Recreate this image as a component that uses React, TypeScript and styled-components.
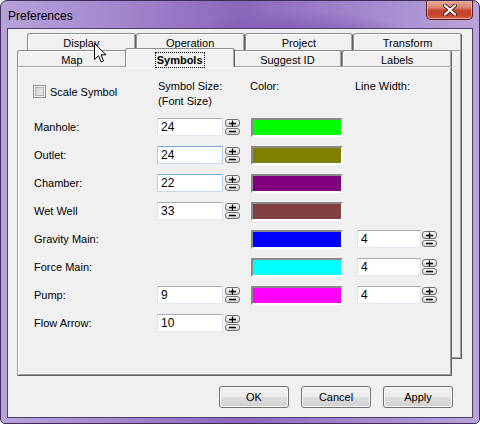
import React from 'react';
import styled, { createGlobalStyle, css } from 'styled-components';

const Global = createGlobalStyle`
  html, body { margin: 0; padding: 0; background: #ffffff; }
  body { font-family: "Liberation Sans", Arial, sans-serif; font-size: 11px; color: #000; }
  * { box-sizing: border-box; }
`;

const Window = styled.div`
  position: relative;
  width: 480px;
  height: 424px;
  display: flex;
  flex-direction: column;
  border: 1px solid #3b2c58;
  border-radius: 7px 7px 5px 5px;
  padding: 0 6px 5px 6px;
  overflow: hidden;
  background:
    radial-gradient(ellipse 120px 30px at 300px 40px, rgba(120, 80, 175, 0.9), rgba(120, 80, 175, 0) 100%),
    linear-gradient(90deg, #b7a2d9 0%, #a286cd 25%, #8b66bc 50%, #9f83cb 72%, #b8a4da 100%);
`;

const TitleBar = styled.div`
  height: 27px;
  display: flex;
  align-items: flex-start;
  justify-content: space-between;
`;

const Title = styled.div`
  font-family: "Liberation Sans", Arial, sans-serif;
  font-size: 12px;
  padding: 8px 0 0 1px;
  color: #000;
`;

const CloseButton = styled.div`
  width: 47px;
  height: 20px;
  margin-top: -1px;
  border: 1px solid #5a1f1a;
  border-top: none;
  border-radius: 0 0 5px 5px;
  display: flex;
  align-items: center;
  justify-content: center;
  background: linear-gradient(180deg, #eab0a2 0%, #d98372 40%, #c5452f 55%, #c4452d 80%, #d76b52 100%);
  box-shadow: inset 0 0 0 1px rgba(255, 210, 200, 0.55);
`;

const Client = styled.div`
  flex: 1;
  display: flex;
  flex-direction: column;
  background: #f0f0f0;
  border: 1px solid #4e3e68;
  padding: 4px 9px 0 9px;
`;

const TabControl = styled.div`
  display: grid;
  width: 445px;
`;

const BackLayer = styled.div`
  grid-area: 1 / 1;
  margin-left: 10px;
  display: flex;
  flex-direction: column;
`;

const FrontLayer = styled.div`
  grid-area: 1 / 1;
  margin-top: 17px;
  margin-right: 10px;
  display: flex;
  flex-direction: column;
`;

const TabRow = styled.div<{ $h: number }>`
  display: flex;
  height: ${(p) => p.$h}px;
`;

const Tab = styled.div<{ $selected?: boolean }>`
  position: relative;
  flex: 1;
  display: flex;
  justify-content: center;
  padding-top: 2px;
  background: #f0f0f0;
  border: 1px solid;
  border-bottom: none;
  border-color: #8c8c8c #5f5f5f transparent #8c8c8c;
  border-radius: 3px 3px 0 0;
  box-shadow: inset 1px 1px 0 #ffffff, inset -1px 0 0 #a8a8a8;
  line-height: 14px;
  ${(p) =>
    p.$selected &&
    css`
      z-index: 2;
      margin: -2px -2px -1px -2px;
      padding-top: 4px;
      font-weight: bold;
    `}
`;

const FocusText = styled.span`
  outline: 1px dotted #000;
  outline-offset: 0px;
  padding: 0 1px;
  height: 14px;
`;

const BackPanel = styled.div`
  height: 309px;
  background: #f0f0f0;
  border: 1px solid;
  border-color: #a0a0a0 #5f5f5f #5f5f5f #a0a0a0;
  box-shadow: inset -1px -1px 0 #a0a0a0;
`;

const Panel = styled.div`
  position: relative;
  z-index: 1;
  height: 310px;
  background: #f0f0f0;
  border: 1px solid;
  border-color: #a0a0a0 #5f5f5f #5f5f5f #a0a0a0;
  box-shadow: inset 1px 1px 0 #ffffff, inset -1px -1px 0 #a0a0a0;
  padding: 12px 0 0 16px;
`;

const Grid = styled.div`
  display: grid;
  grid-template-columns: 123px 93px 107px 90px;
  grid-template-rows: 34px repeat(8, 28px);
  align-items: center;
`;

const HeaderCell = styled.div<{ $shift?: number }>`
  align-self: start;
  line-height: 15px;
  margin-left: ${(p) => p.$shift ?? 0}px;
`;

const CheckGroup = styled.label`
  align-self: start;
  margin-top: 6px;
  margin-left: -1px;
  display: flex;
  align-items: center;
  gap: 4px;
`;

const CheckBox = styled.span`
  width: 13px;
  height: 13px;
  border: 1px solid #8e8f8f;
  background: #f4f4f4;
  box-shadow: inset 0 0 0 1px #f4f4f4, inset 0 0 0 2px #b0b0b0;
  background-image: linear-gradient(135deg, #cbcbcb, #f6f6f6);
`;

const RowLabel = styled.div`
  line-height: 14px;
`;

const SpinField = styled.div<{ $gap: number }>`
  display: flex;
  align-items: center;
  gap: ${(p) => p.$gap}px;
`;

const TextInput = styled.input<{ $w: number; $hot?: boolean }>`
  width: ${(p) => p.$w}px;
  height: 18px;
  margin: 0;
  padding: 0 0 0 3px;
  font-family: "Liberation Sans", Arial, sans-serif;
  font-size: 12px;
  color: #000;
  background: #fff;
  border: 1px solid;
  border-color: ${(p) =>
    p.$hot ? '#7ea8d4 #b7d2ec #c3dbf0 #b7d2ec' : '#abadb3 #dbdfe6 #e3e9ef #e2e3ea'};
  outline: none;
`;

const SpinStack = styled.div`
  display: flex;
  flex-direction: column;
  gap: 1px;
`;

const SpinBtn = styled.div<{ $h: number }>`
  width: 15px;
  height: ${(p) => p.$h}px;
  border: 1px solid #6f6f6f;
  border-radius: 3px;
  background: linear-gradient(180deg, #fbfbfb 0%, #e6e6e6 50%, #d2d2d2 100%);
  display: flex;
  align-items: center;
  justify-content: center;
`;

const Swatch = styled.div<{ $c: string }>`
  width: 92px;
  height: 19px;
  margin-left: 1px;
  background: ${(p) => p.$c};
  border: 2px solid;
  border-color: #8a8a8a #ffffff #ffffff #8a8a8a;
  box-shadow: 0 0 0 0 transparent;
`;

const ButtonBar = styled.div`
  display: flex;
  justify-content: flex-end;
  gap: 12px;
  margin-top: 10px;
  padding-right: 10px;
`;

const Button = styled.div`
  width: 70px;
  height: 22px;
  display: flex;
  align-items: center;
  justify-content: center;
  border: 1px solid #707070;
  border-radius: 3px;
  background: linear-gradient(180deg, #f2f2f2 0%, #ebebeb 48%, #dddddd 52%, #cfcfcf 100%);
  box-shadow: inset 0 0 0 1px #fbfbfb;
  font-size: 11px;
`;

const CursorWrap = styled.div`
  position: absolute;
  left: 93px;
  top: 42px;
  width: 13px;
  height: 20px;
  z-index: 10;
`;

type Row = { label: string; size?: string; color?: string; lw?: string; hot?: boolean };

const rows: Row[] = [
  { label: 'Manhole:', size: '24', color: '#00ff00' },
  { label: 'Outlet:', size: '24', color: '#808000', hot: true },
  { label: 'Chamber:', size: '22', color: '#800080', hot: true },
  { label: 'Wet Well', size: '33', color: '#804040' },
  { label: 'Gravity Main:', color: '#0000ff', lw: '4' },
  { label: 'Force Main:', color: '#00ffff', lw: '4' },
  { label: 'Pump:', size: '9', color: '#ff00ff', lw: '4' },
  { label: 'Flow Arrow:', size: '10' },
];

const Plus = () => (
  <svg width="9" height="7" viewBox="0 0 9 7">
    <path d="M1 3.5H8M4.5 0.5V6.5" stroke="#000" strokeWidth="1.3" fill="none" />
  </svg>
);
const Minus = () => (
  <svg width="9" height="5" viewBox="0 0 9 5">
    <path d="M1 2.5H8" stroke="#000" strokeWidth="1.3" fill="none" />
  </svg>
);

const Spinner = ({ value, w, gap, hot }: { value: string; w: number; gap: number; hot?: boolean }) => (
  <SpinField $gap={gap}>
    <TextInput $w={w} $hot={hot} value={value} readOnly />
    <SpinStack>
      <SpinBtn $h={8}>
        <Plus />
      </SpinBtn>
      <SpinBtn $h={7}>
        <Minus />
      </SpinBtn>
    </SpinStack>
  </SpinField>
);

export default function App() {
  const back = ['Display', 'Operation', 'Project', 'Transform'];
  const front = ['Map', 'Symbols', 'Suggest ID', 'Labels'];
  return (
    <>
      <Global />
      <Window>
        <TitleBar>
          <Title>Preferences</Title>
          <CloseButton>
            <svg width="14" height="12" viewBox="0 0 14 12">
              <path d="M2 1.5L12 10.5M12 1.5L2 10.5" stroke="#4a1d16" strokeWidth="4" strokeLinecap="round" />
              <path d="M2 1.5L12 10.5M12 1.5L2 10.5" stroke="#ffffff" strokeWidth="2.2" strokeLinecap="round" />
            </svg>
          </CloseButton>
        </TitleBar>
        <Client>
          <TabControl>
            <BackLayer>
              <TabRow $h={17}>
                {back.map((t) => (
                  <Tab key={t}>{t}</Tab>
                ))}
              </TabRow>
              <BackPanel />
            </BackLayer>
            <FrontLayer>
              <TabRow $h={16}>
                {front.map((t) =>
                  t === 'Symbols' ? (
                    <Tab key={t} $selected>
                      <FocusText>{t}</FocusText>
                    </Tab>
                  ) : (
                    <Tab key={t}>{t}</Tab>
                  )
                )}
              </TabRow>
              <Panel>
                <Grid>
                  <CheckGroup>
                    <CheckBox />
                    <span>Scale Symbol</span>
                  </CheckGroup>
                  <HeaderCell $shift={1}>
                    Symbol Size:
                    <br />
                    (Font Size)
                  </HeaderCell>
                  <HeaderCell>Color:</HeaderCell>
                  <HeaderCell $shift={-2}>Line Width:</HeaderCell>
                  {rows.map((r) => (
                    <React.Fragment key={r.label}>
                      <RowLabel>{r.label}</RowLabel>
                      <div>{r.size ? <Spinner value={r.size} w={66} gap={2} hot={r.hot} /> : null}</div>
                      <div>{r.color ? <Swatch $c={r.color} /> : null}</div>
                      <div>{r.lw ? <Spinner value={r.lw} w={64} gap={1} /> : null}</div>
                    </React.Fragment>
                  ))}
                </Grid>
              </Panel>
            </FrontLayer>
          </TabControl>
          <ButtonBar>
            <Button>OK</Button>
            <Button>Cancel</Button>
            <Button>Apply</Button>
          </ButtonBar>
        </Client>
        <CursorWrap>
          <svg width="13" height="20" viewBox="0 0 13 20">
            <path
              d="M0.5 0.5V16.5L4.5 12.8L7.2 19L9.6 17.9L7 11.8H12Z"
              fill="#ffffff"
              stroke="#000000"
              strokeWidth="1"
              strokeLinejoin="miter"
            />
          </svg>
        </CursorWrap>
      </Window>
    </>
  );
}
